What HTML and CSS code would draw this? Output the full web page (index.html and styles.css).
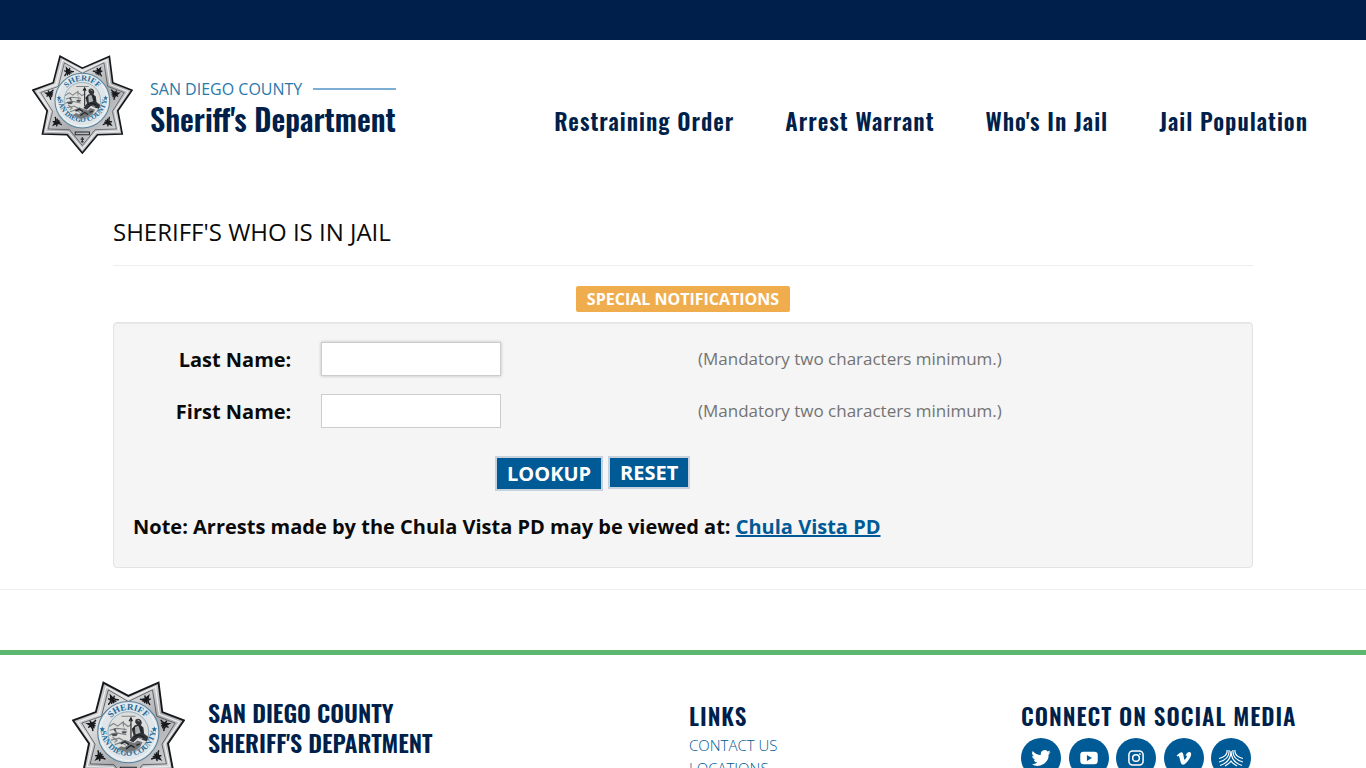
FILE: index.html
```html
<!DOCTYPE html>
<html lang="en">
<head>
<meta charset="utf-8">
<meta name="viewport" content="width=device-width, initial-scale=1">
<title>Sheriff's Who Is In Jail</title>
<link rel="stylesheet" href="styles.css">
</head>
<body>
<svg class="defs" width="0" height="0" aria-hidden="true">
  <defs>
    <linearGradient id="silver" x1="0" y1="0" x2="1" y2="1">
      <stop offset="0" stop-color="#9b9da0"/><stop offset=".3" stop-color="#dcddde"/><stop offset=".55" stop-color="#a9abae"/><stop offset=".8" stop-color="#d0d1d3"/><stop offset="1" stop-color="#8d8f92"/>
    </linearGradient>
    <path id="arc-top" d="M129 168A59 59 0 0 1 247 168"/>
    <path id="arc-bottom" d="M115 158A73 73 0 1 0 261 158"/>
    <g id="filigree" fill="none" stroke="#17191c" stroke-width="4" stroke-linecap="round">
      <path d="M-14 9Q-5 7 0-9Q5 7 14 9M0-9V11M-8-4Q-4 2 0 3Q4 2 8-4M-6 10L0 3L6 10"/>
    </g>
    <symbol id="badge" viewBox="39 33 299 293">
      <path d="M122 37L188 72L268 37L278 115L335 137L293 198L306 267L233 269L188 323L143 269L70 267L84 198L42 137L102 115Z" fill="url(#silver)" stroke="#16181b" stroke-width="5"/>
      <path d="M129 48L188 80L260 48L270 121L323 141L284 199L297 259L229 261L188 311L147 261L79 259L93 199L54 141L110 121Z" fill="none" stroke="#f2f2f2" stroke-width="3"/>
      <path d="M135 56L188 87L252 56L263 126L312 144L277 200L289 252L226 254L188 301L150 254L87 252L100 200L65 144L117 126Z" fill="none" stroke="#404347" stroke-width="2"/>
      <use href="#filigree" transform="translate(145 80) rotate(-25)"/>
      <use href="#filigree" transform="translate(237 80) rotate(30)"/>
      <use href="#filigree" transform="translate(287 148) rotate(75)"/>
      <use href="#filigree" transform="translate(266 234) rotate(130)"/>
      <use href="#filigree" transform="translate(110 234) rotate(-130)"/>
      <use href="#filigree" transform="translate(89 148) rotate(-75)"/>
      <path d="M167 261H209V269H167ZM188 276V293M183 282H193M184 290H192" fill="none" stroke="#25282b" stroke-width="3"/>
      <circle cx="188" cy="168" r="81" fill="#dfe5e8" stroke="#59839d" stroke-width="3"/>
      <circle cx="188" cy="168" r="75" fill="none" stroke="#f8fafb" stroke-width="2"/>
      <circle cx="188" cy="168" r="54" fill="#dededc" stroke="#719bb2" stroke-width="2"/>
      <text class="seal-text"><textPath href="#arc-top" startOffset="50%" text-anchor="middle">SHERIFF</textPath></text>
      <text class="seal-text seal-text-small"><textPath href="#arc-bottom" startOffset="50%" text-anchor="middle">SAN DIEGO COUNTY</textPath></text>
      <path d="M119 153L121 158L126 158L122 162L124 167L119 164L114 167L116 162L112 158L117 158ZM257 153L259 158L264 158L260 162L262 167L257 164L252 167L254 162L250 158L255 158Z" fill="#246c9b"/>
      <path d="M137 153L149 145L160 152L173 142L187 153L196 148M139 163L157 158L184 161M137 176L158 170L183 175M142 189L164 184L178 192M152 201L168 195L182 203M146 181L158 190L151 195M175 153V139M170 126H207" fill="none" stroke="#7e8487" stroke-width="3"/>
      <path d="M143 172H160L156 178H147ZM153 158V171M149 162L153 158L157 169ZM171 166H184L181 171H173ZM177 155V166" fill="#4b5053" stroke="#4b5053"/>
      <path d="M207 135Q216 129 222 137Q226 143 221 150L228 156L230 172L241 181L237 192L226 189L214 183L201 195L191 190L202 176L197 160L205 150L211 149L206 142Z" fill="#303438"/>
      <path d="M195 130V184M190 139L195 130L199 139M199 160Q207 154 213 160M208 166L222 164M205 180L216 175L230 181M221 153L225 170" fill="none" stroke="#1d2023" stroke-width="3"/>
      <path d="M207 155L214 153L219 169L208 172ZM212 136L218 139M218 183L226 186" fill="#a9acad" stroke="#c5c8c9" stroke-width="2"/>
      <path d="M160 198L179 188L191 193L204 197L212 190L226 195L219 207Q207 219 188 220Q173 220 160 211L169 205L178 208L187 201L177 197Z" fill="#73777a"/>
      <path d="M168 199L179 193L190 201M182 212L195 203L205 209M209 203L219 199" fill="none" stroke="#25292c" stroke-width="4"/>
    </symbol>
  </defs>
</svg>

<div class="topbar"></div>
<header class="header">
  <a class="brand" href="#">
    <svg class="brand-badge" role="img" aria-label="Sheriff badge"><use href="#badge"/></svg>
    <span class="brand-text">
      <span class="brand-county">SAN DIEGO COUNTY</span>
      <span class="brand-name">Sheriff's Department</span>
    </span>
  </a>
  <nav class="nav">
    <a href="#">Restraining Order</a>
    <a href="#">Arrest Warrant</a>
    <a href="#">Who's In Jail</a>
    <a href="#">Jail Population</a>
  </nav>
</header>

<main class="main">
  <h1 class="title">SHERIFF'S WHO IS IN JAIL</h1>
  <div class="notice"><a class="notice-label" href="#">SPECIAL NOTIFICATIONS</a></div>
  <form class="well">
    <div class="row">
      <label for="last">Last Name:</label>
      <div class="field"><input class="raised" id="last" type="text" aria-describedby="last-hint"></div>
      <span class="hint" id="last-hint">(Mandatory two characters minimum.)</span>
    </div>
    <div class="row">
      <label for="first">First Name:</label>
      <div class="field"><input id="first" type="text" aria-describedby="first-hint"></div>
      <span class="hint" id="first-hint">(Mandatory two characters minimum.)</span>
    </div>
    <div class="actions">
      <button class="btn btn-primary" type="submit">LOOKUP</button>
      <button class="btn" type="reset">RESET</button>
    </div>
    <p class="note">Note: Arrests made by the Chula Vista PD may be viewed at: <a href="#">Chula Vista PD</a></p>
  </form>
</main>

<footer class="footer">
  <div class="footer-brand">
    <svg class="footer-badge" role="img" aria-label="Sheriff badge"><use href="#badge"/></svg>
    <div class="footer-name">SAN DIEGO COUNTY<br>SHERIFF'S DEPARTMENT</div>
  </div>
  <div class="footer-links">
    <h2>LINKS</h2>
    <a href="#">CONTACT US</a>
    <a href="#">LOCATIONS</a>
  </div>
  <div class="footer-social">
    <h2>CONNECT ON SOCIAL MEDIA</h2>
    <div class="social">
      <a href="#" aria-label="Twitter"><svg viewBox="0 0 24 24"><path fill="#fff" d="M23.6 4.9a9 9 0 0 1-2.7.8 4.700 4.700 0 0 0 2.100-2.600 9.500 9.500 0 0 1-3 1.100 4.700 4.700 0 0 0-8.100 4.300A13.400 13.400 0 0 1 2.100 3.600a4.700 4.700 0 0 0 1.500 6.300 4.700 4.700 0 0 1-2.100-.6 4.700 4.700 0 0 0 3.800 4.700 4.700 4.700 0 0 1-2.100.1 4.700 4.700 0 0 0 4.400 3.300A9.500 9.500 0 0 1 .6 19.300 13.400 13.400 0 0 0 21.200 7.400a9.600 9.600 0 0 0 2.400-2.500Z"/></svg></a>
      <a href="#" aria-label="YouTube"><svg viewBox="0 0 24 24"><rect x="1.500" y="4.500" width="21" height="15" rx="4" fill="#fff"/><path fill="#005a96" d="M9.500 8.500V15.500L15.500 12Z"/></svg></a>
      <a href="#" aria-label="Instagram"><svg viewBox="0 0 24 24" fill="none" stroke="#fff" stroke-width="1.800"><rect x="3.500" y="3.500" width="17" height="17" rx="4.500"/><circle cx="12" cy="12" r="4"/><circle cx="16.700" cy="7.300" r=".7" fill="#fff" stroke-width=".8"/></svg></a>
      <a href="#" aria-label="Vimeo"><svg viewBox="0 0 24 24"><path fill="#fff" d="M20.600 7.800C20.400 10.900 17.200 15 14.700 17.800C11.600 21 9.200 20.700 8 17L6.400 11.200C5.900 9.300 5.500 9.200 4.200 10.200L3.200 8.900C5.100 7.300 7 5.200 8.500 5C10.200 4.800 10.900 6 11.300 8.300C11.900 11.900 12.300 14.100 12.900 14.100C13.500 14.100 15.400 11.300 15.500 10C15.600 8.900 14.700 8.900 13.700 9.300C15.300 4.100 20.900 3.100 20.600 7.800Z"/></svg></a>
      <a href="#" aria-label="Nextdoor"><svg class="wide-icon" viewBox="0 0 24 18" fill="none" stroke="#fff" stroke-width="1.200"><path d="M8 1Q9 7 0 9.500M10 1Q11 10 0 13M12 2Q12 13 1 16.500M16 1Q15 7 24 9.500M14 1Q13 10 24 13M12 2Q12 13 23 16.500M6 17Q10 15 12 12Q14 15 18 17"/></svg></a>
    </div>
  </div>
</footer>
</body>
</html>
```
FILE: styles.css
```css
* { box-sizing: border-box; }
body { margin: 0; background: #fff; color: #0a0a0a; font-family: "Open Sans", "Noto Sans", sans-serif; font-size: 16px; }
a { color: #005a96; }
.defs { position: absolute; }
.seal-text { fill: #236b9a; font-family: "Liberation Serif", serif; font-size: 24px; font-weight: 700; }
.seal-text-small { font-size: 21px; }

.topbar { height: 40px; background: #001f4b; }
.header { display: flex; justify-content: space-between; align-items: flex-start; padding: 15px 58px 0 32px; min-height: 152px; }
.brand { display: flex; gap: 17px; text-decoration: none; }
.brand-badge { width: 101px; height: 99px; }
.brand-text { display: flex; flex-direction: column; padding-top: 24px; }
.brand-county { display: flex; align-items: center; gap: 11px; font-size: 16px; line-height: 20px; color: #2a79ab; }
.brand-county::after { content: ""; flex: 1; height: 2px; background: #7daed3; }
.brand-name, .nav a, .footer h2, .footer-name { font-family: Oswald, "Open Sans", sans-serif; font-weight: 600; color: #001f4b; }
.brand-name { font-size: 30px; line-height: 40px; white-space: nowrap; }
.nav { display: flex; gap: 51px; padding-top: 50px; }
.nav a { font-size: 23px; line-height: 32px; letter-spacing: 1px; text-decoration: none; white-space: nowrap; }

.main { max-width: 1140px; margin: 0 auto; }
.title { margin: 0; padding: 23px 0 17px; border-bottom: 1px solid #eee; font-size: 24px; line-height: 33px; font-weight: 400; }
.notice { display: flex; justify-content: center; padding: 20px 0 10px; }
.notice-label { padding: 2px 11px; background: #f0ad4e; color: #fff; border-radius: 2px; font-weight: 700; line-height: 22px; text-decoration: none; }
.well { padding: 18px 19px; min-height: 246px; border: 1px solid #e3e3e3; border-radius: 4px; background: #f5f5f5; box-shadow: inset 0 1px 1px rgba(0, 0, 0, .05); }
.row { display: grid; grid-template-columns: 2fr 4fr 6fr; margin: 0 -15px 16px; line-height: 36px; }
.row > * { padding: 0 15px; }
.row label { text-align: right; font-size: 20px; font-weight: 700; line-height: 38px; margin-bottom: -2px; }
.field { display: flex; align-items: center; }
.field input { width: 180px; height: 34px; padding: 4px 8px; border: 1px solid #ccc; background: #fff; font: inherit; }
.field .raised { box-shadow: 0 0 3px #bbb; }
.hint { font-size: 17px; color: #737373; }
.actions { display: flex; align-items: flex-start; gap: 5px; margin: 27px 0 20px 362px; }
.btn { padding: 0 10px; border: 2px solid #c6d3de; background: #005a96; color: #fff; font-family: inherit; font-size: 20px; font-weight: 700; line-height: 29px; }
.btn-primary { line-height: 31px; }
.note { margin: 0; font-size: 20px; font-weight: 700; line-height: 32px; }

.footer { display: grid; grid-template-columns: 617px 332px 1fr; margin-top: 82px; padding: 26px 60px 32px 72px; border-top: 5px solid #5cb870; position: relative; }
.footer::before { content: ""; position: absolute; left: 0; right: 0; top: -66px; height: 1px; background: #eee; }
.footer-brand { display: flex; gap: 23px; }
.footer-badge { width: 113px; height: 111px; }
.footer-name { padding-top: 16px; font-size: 24px; line-height: 30px; }
.footer h2 { margin: 0; font-size: 23px; line-height: 36px; letter-spacing: 1px; white-space: nowrap; }
.footer-links { display: flex; flex-direction: column; align-items: flex-start; padding-top: 17px; }
.footer-links a { font-size: 15px; font-weight: 300; line-height: 23px; text-decoration: none; }
.footer-social { padding-top: 17px; }
.social { display: flex; justify-content: space-between; width: 230px; padding-top: 4px; }
.social a { display: flex; align-items: center; justify-content: center; width: 40px; height: 40px; border-radius: 50%; background: #005a96; }
.social svg { width: 20px; height: 20px; }
.social .wide-icon { width: 24px; height: 18px; }
```
